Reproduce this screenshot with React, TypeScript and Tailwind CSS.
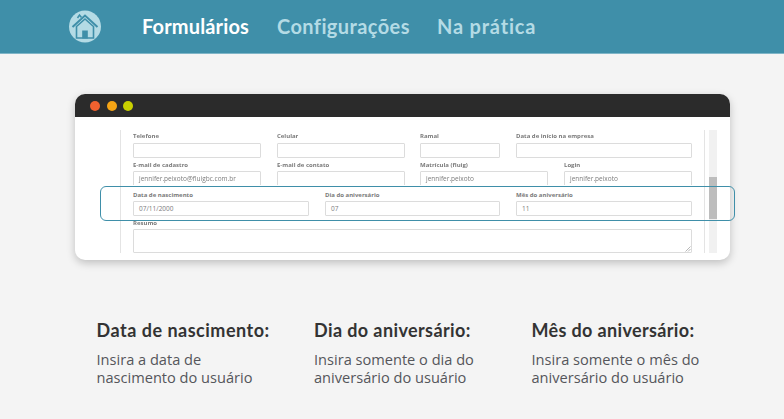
import React from 'react';

const heading = "font-['Lato',sans-serif]";

const HomeLogo = () => (
  <svg width="32" height="33" viewBox="0 0 32 33" className="shrink-0">
    <circle cx="16" cy="16.5" r="16" fill="#b4dbe5" />
    <path d="M3.5 17 L16 5.5 L28.5 17" fill="none" stroke="#3f8fa9" strokeWidth="2" strokeLinejoin="miter" />
    <path d="M8.5 8 L10.5 5 L12.5 7.5" fill="none" stroke="#3f8fa9" strokeWidth="1.6" />
    <path d="M7.5 16.5 L16 9 L24.5 16.5 L24.5 28 L7.5 28 Z" fill="#b4dbe5" stroke="#3f8fa9" strokeWidth="1.6" />
    <rect x="13.2" y="20.5" width="5.6" height="8" fill="#3f8fa9" />
  </svg>
);

const Field = ({ label, value, className }: { label: string; value?: string; className: string }) => (
  <div className={className}>
    <div className="h-[8px] text-[6px] leading-[8px] font-bold text-[#7a7a7a] whitespace-nowrap">{label}</div>
    <div className="mt-[2.5px] h-[15px] rounded-[1px] border border-[#dcdcdc] bg-white px-[5px] text-[6.5px] leading-[13px] text-[#7d7d7d] whitespace-nowrap overflow-hidden">
      {value}
    </div>
  </div>
);

const Col = ({ title, lines, tracking }: { title: string; lines: string[]; tracking: string }) => (
  <div className="w-[217.5px] shrink-0">
    <h3 className={`${heading} ${tracking} text-[18px] leading-[22px] font-bold text-[#333333]`}>{title}</h3>
    <p className="mt-[9px] font-['Open_Sans',sans-serif] text-[14.6px] leading-[18px] text-[#55565b]">
      {lines[0]}
      <br />
      {lines[1]}
    </p>
  </div>
);

export default function App() {
  return (
    <div className="relative h-[419px] w-[784px] overflow-hidden bg-[#f4f4f4] font-['Open_Sans',sans-serif]">
      <header className="flex h-[54px] items-center border-b border-[#7fb5c7] bg-[#3f8fa9] pl-[69px]">
        <HomeLogo />
        <nav className={`${heading} ml-[41px] -mt-[2px] flex text-[20px] font-bold text-[#b4dbe5]`}>
          <span className="w-[135px] text-white tracking-[0.15px]">Formulários</span>
          <span className="w-[160px] tracking-[0.4px]">Configurações</span>
          <span className="tracking-[0.8px]">Na prática</span>
        </nav>
      </header>

      <main className="px-[75px] pt-[40px]">
        <div className="h-[166px] w-[655px] overflow-hidden rounded-[10px] bg-white shadow-[0_3px_8px_rgba(0,0,0,0.22)]">
          <div className="flex h-[23px] items-center gap-[6.5px] bg-[#2b2b2b] pl-[15px]">
            <span className="size-[10px] rounded-full bg-[#f0612f]" />
            <span className="size-[10px] rounded-full bg-[#f5a415]" />
            <span className="size-[10px] rounded-full bg-[#c9d000]" />
          </div>
          <div className="ml-[45px] mt-[13px] flex h-[123px] w-[597px] items-stretch blur-[0.4px]">
            <div className="relative h-full w-[585px] overflow-hidden border-x border-[#e4e4e4] px-[12px] pt-[2px]">
              <div className="flex">
                <Field label="Telefone" className="w-[128px]" />
                <Field label="Celular" className="ml-[16px] w-[128px]" />
                <Field label="Ramal" className="ml-[15px] w-[80px]" />
                <Field label="Data de início na empresa" className="ml-[16px] w-[176px]" />
              </div>
              <div className="mt-[3px] flex">
                <Field label="E-mail de cadastro" value="jennifer.peixoto@fluigbc.com.br" className="w-[128px]" />
                <Field label="E-mail de contato" className="ml-[16px] w-[128px]" />
                <Field label="Matrícula (fluig)" value="jennifer.peixoto" className="ml-[15px] w-[128px]" />
                <Field label="Login" value="jennifer.peixoto" className="ml-[16px] w-[128px]" />
              </div>
              <div className="relative -mt-[1px] flex bg-white pt-[5.5px]">
                <Field label="Data de nascimento" value="07/11/2000" className="w-[176px]" />
                <Field label="Dia do aniversário" value="07" className="ml-[16px] w-[175px]" />
                <Field label="Mês do aniversário" value="11" className="ml-[16px] w-[176px]" />
              </div>
              <div className="mt-[3px] w-[559px]">
                <div className="h-[8px] text-[6px] leading-[8px] font-bold text-[#7a7a7a]">Resumo</div>
                <div className="relative mt-[2px] h-[24px] rounded-[1px] border border-[#dcdcdc] bg-white">
                  <svg width="6" height="6" viewBox="0 0 6 6" className="absolute bottom-0 right-0">
                    <path d="M0.5 5.5 L5.5 0.5 M3 5.5 L5.5 3" stroke="#9a9a9a" strokeWidth="0.7" />
                  </svg>
                </div>
              </div>
            </div>
            <div className="ml-[4px] w-[8px] bg-[#f1f1f1] pt-[47px]">
              <div className="h-[42px] w-full bg-[#bdbdbd]" />
            </div>
          </div>
        </div>

        <section className="ml-[21.5px] mt-[59px] flex">
          <Col title="Data de nascimento:" tracking="tracking-[0.5px]" lines={['Insira a data de', 'nascimento do usuário']} />
          <Col title="Dia do aniversário:" tracking="tracking-[0.4px]" lines={['Insira somente o dia do', 'aniversário do usuário']} />
          <Col title="Mês do aniversário:" tracking="tracking-[0.35px]" lines={['Insira somente o mês do', 'aniversário do usuário']} />
        </section>
      </main>

      <div className="absolute left-[100px] top-[186px] h-[35px] w-[635px] rounded-[6px] border border-[#3f8fa9]" />
    </div>
  );
}
